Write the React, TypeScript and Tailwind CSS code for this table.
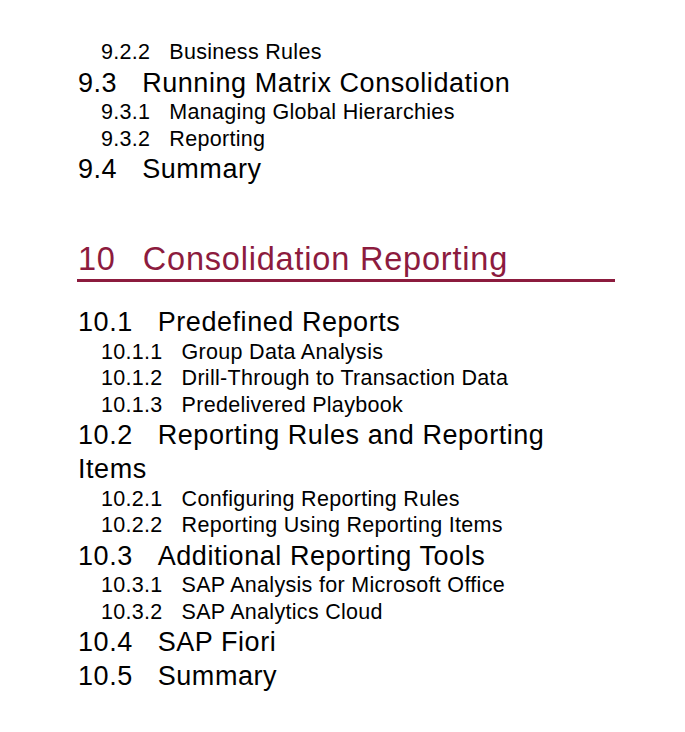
import React from "react";

type Entry = { level: "chapter" | "sec" | "sub"; num: string; title: string };

const entries: Entry[] = [
  { level: "sub", num: "9.2.2", title: "Business Rules" },
  { level: "sec", num: "9.3", title: "Running Matrix Consolidation" },
  { level: "sub", num: "9.3.1", title: "Managing Global Hierarchies" },
  { level: "sub", num: "9.3.2", title: "Reporting" },
  { level: "sec", num: "9.4", title: "Summary" },
  { level: "chapter", num: "10", title: "Consolidation Reporting" },
  { level: "sec", num: "10.1", title: "Predefined Reports" },
  { level: "sub", num: "10.1.1", title: "Group Data Analysis" },
  { level: "sub", num: "10.1.2", title: "Drill-Through to Transaction Data" },
  { level: "sub", num: "10.1.3", title: "Predelivered Playbook" },
  { level: "sec", num: "10.2", title: "Reporting Rules and Reporting Items" },
  { level: "sub", num: "10.2.1", title: "Configuring Reporting Rules" },
  { level: "sub", num: "10.2.2", title: "Reporting Using Reporting Items" },
  { level: "sec", num: "10.3", title: "Additional Reporting Tools" },
  { level: "sub", num: "10.3.1", title: "SAP Analysis for Microsoft Office" },
  { level: "sub", num: "10.3.2", title: "SAP Analytics Cloud" },
  { level: "sec", num: "10.4", title: "SAP Fiori" },
  { level: "sec", num: "10.5", title: "Summary" },
];

const TocLine = ({ entry }: { entry: Entry }) => {
  if (entry.level === "chapter") {
    return (
      <div className="mt-[54px] mb-[23px] -ml-[1px] border-b-[3px] border-[#8c1b3e] pb-[1px] pl-[1px] text-[32.5px] leading-[38px] tracking-[0.8px] text-[#8c1b3e]">
        <span className="mr-[27px]">{entry.num}</span>
        {entry.title}
      </div>
    );
  }

  if (entry.level === "sec") {
    return (
      <div className="pt-[1px] -mb-[1px] text-[27px] leading-[33.7px] tracking-[0.55px]">
        <span className="mr-[25px]">{entry.num}</span>
        {entry.title}
      </div>
    );
  }

  return (
    <div className="pl-[23px] text-[21.5px] leading-[26.5px] tracking-[0.3px]">
      <span className="mr-[19px]">{entry.num}</span>
      {entry.title}
    </div>
  );
};

export default function App() {
  return (
    <div className="min-h-screen bg-white font-['Liberation_Sans',Arial,sans-serif] text-black">
      <div className="w-[615px] pl-[78px] pt-[39px]">
        {entries.map((entry) => (
          <TocLine key={entry.num + entry.level} entry={entry} />
        ))}
      </div>
    </div>
  );
}
